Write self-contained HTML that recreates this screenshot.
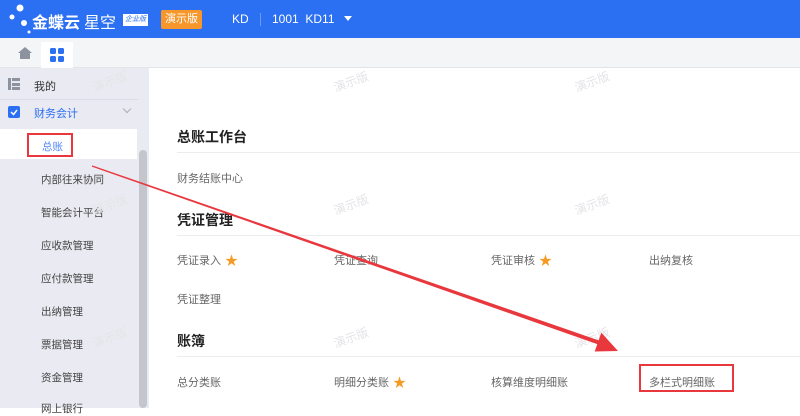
<!DOCTYPE html><html><head><meta charset="utf-8"><style>
*{margin:0;padding:0;box-sizing:border-box}
body{width:800px;height:408px;overflow:hidden;position:relative;background:#fff;font-family:"Liberation Sans","Noto Sans CJK SC",sans-serif;font-size:11px;color:#333}
.a{position:absolute;white-space:nowrap}
.hd{position:absolute;left:0;top:0;width:800px;height:38px;background:#2b6ff2}
.tb{position:absolute;left:0;top:38px;width:800px;height:30px;background:#f4f5f7;border-bottom:1px solid #e3e4e8}
.sb{position:absolute;left:0;top:68px;width:138px;height:340px;background:#eaeaf2}
.sc{position:absolute;left:138px;top:68px;width:11px;height:340px;background:#eaeaf2}
.sci{position:absolute;left:139px;top:150px;width:8px;height:258px;background:#c4c6cc;border-radius:4px}
.mi{position:absolute;left:41px;color:#444;font-size:10.5px}
.hr{position:absolute;left:177px;width:623px;height:1px;background:#ececef}
.h{position:absolute;left:177px;font-size:14px;font-weight:bold;color:#222}
.it{position:absolute;color:#666;font-size:11px}
.wm{position:absolute;color:#e4e4e8;font-size:12px;transform:rotate(-20deg)}
.star{position:absolute;top:-2px;color:#f59a23;font-size:13px}
</style></head><body>
<div class="hd"></div>
<svg class="a" style="left:6px;top:3px" width="30" height="32"><circle cx="14" cy="5" r="3.5" fill="#fff"/><circle cx="6" cy="14" r="2.5" fill="#fff"/><circle cx="18" cy="20" r="3" fill="#fff"/><circle cx="23" cy="29" r="1.5" fill="#fff"/></svg>
<div class="a" style="left:32px;top:9px;color:#fff;font-size:16px;font-weight:bold">金蝶云</div>
<div class="a" style="left:84px;top:9px;color:#fff;font-size:16px">星空</div>
<div class="a" style="left:123px;top:14px;width:25px;height:12px;border:1px solid #fff;color:#2b6ff2;background:#fff;font-size:7px;line-height:10px;text-align:center;font-style:italic">企业版</div>
<div class="a" style="left:161px;top:10px;width:41px;height:19px;background:#f7962a;color:#fff;font-size:11px;line-height:19px;text-align:center;border-radius:2px">演示版</div>
<div class="a" style="left:232px;top:12px;color:#fff;font-size:12px">KD</div>
<div class="a" style="left:260px;top:13px;width:1px;height:13px;background:#6d98f5"></div>
<div class="a" style="left:272px;top:12px;color:#fff;font-size:12px">1001&nbsp; KD11</div>
<div class="a" style="left:344px;top:16px;border-left:4px solid transparent;border-right:4px solid transparent;border-top:5px solid #fff"></div>
<div class="tb"></div>
<svg class="a" style="left:17px;top:46px" width="16" height="14"><path d="M8 1 L15 7 L13 7 L13 13 L3 13 L3 7 L1 7 Z" fill="#8d939e"/></svg>
<div class="a" style="left:41px;top:42px;width:32px;height:26px;background:#fff"></div>
<svg class="a" style="left:50px;top:48px" width="15" height="15"><rect x="0" y="0" width="6" height="6" rx="1.5" fill="#2b6ff2"/><rect x="8" y="0" width="6" height="6" rx="1.5" fill="#2b6ff2"/><rect x="0" y="8" width="6" height="6" rx="1.5" fill="#2b6ff2"/><rect x="8" y="8" width="6" height="6" rx="1.5" fill="#2b6ff2"/></svg>
<div class="sb"></div><div class="sc"></div><div class="sci"></div>
<div class="a" style="left:0;top:99px;width:138px;height:1px;background:#dcdce6"></div>
<svg class="a" style="left:8px;top:78px" width="12" height="12"><rect x="0" y="0" width="3" height="12" fill="#8d939e"/><rect x="4" y="0" width="8" height="3" fill="#8d939e"/><rect x="4" y="5" width="8" height="3" fill="#8d939e"/><rect x="4" y="9" width="8" height="3" fill="#8d939e"/></svg>
<div class="a" style="left:34px;top:78px;font-size:11px;color:#333">我的</div>
<svg class="a" style="left:8px;top:106px" width="12" height="12"><rect width="12" height="12" rx="2" fill="#2b6ff2"/><path d="M3 6 L5.5 8.5 L9 4" stroke="#fff" stroke-width="1.5" fill="none"/></svg>
<div class="a" style="left:34px;top:105px;font-size:11px;color:#2b6ff2">财务会计</div>
<div class="a" style="left:124px;top:106px;width:6px;height:6px;border-right:1px solid #a9acb5;border-bottom:1px solid #a9acb5;transform:rotate(45deg)"></div>
<div class="a" style="left:0;top:129px;width:137px;height:30px;background:#fff"></div>
<div class="a" style="left:27px;top:133px;width:46px;height:24px;border:2px solid #e8383d"></div>
<div class="a" style="left:42px;top:139px;font-size:10.5px;color:#4f86f7">总账</div>
<div class="mi" style="top:172px">内部往来协同</div>
<div class="mi" style="top:205px">智能会计平台</div>
<div class="mi" style="top:238px">应收款管理</div>
<div class="mi" style="top:271px">应付款管理</div>
<div class="mi" style="top:304px">出纳管理</div>
<div class="mi" style="top:337px">票据管理</div>
<div class="mi" style="top:370px">资金管理</div>
<div class="mi" style="top:401px">网上银行</div>
<div class="wm" style="left:92px;top:73px">演示版</div>
<div class="wm" style="left:92px;top:196px">演示版</div>
<div class="wm" style="left:92px;top:329px">演示版</div>
<div class="wm" style="left:333px;top:73px">演示版</div>
<div class="wm" style="left:574px;top:73px">演示版</div>
<div class="wm" style="left:333px;top:196px">演示版</div>
<div class="wm" style="left:574px;top:196px">演示版</div>
<div class="wm" style="left:574px;top:329px">演示版</div>
<div class="wm" style="left:333px;top:329px">演示版</div>
<div class="h" style="top:127px">总账工作台</div>
<div class="hr" style="top:152px"></div>
<div class="it" style="left:177px;top:170px">财务结账中心</div>
<div class="h" style="top:210px">凭证管理</div>
<div class="hr" style="top:235px"></div>
<div class="it" style="left:177px;top:252px">凭证录入<span class="star" style="left:48px">★</span></div>
<div class="it" style="left:334px;top:252px">凭证查询</div>
<div class="it" style="left:491px;top:252px">凭证审核<span class="star" style="left:48px">★</span></div>
<div class="it" style="left:649px;top:252px">出纳复核</div>
<div class="it" style="left:177px;top:291px">凭证整理</div>
<div class="h" style="top:331px">账簿</div>
<div class="hr" style="top:356px"></div>
<div class="it" style="left:177px;top:374px">总分类账</div>
<div class="it" style="left:334px;top:374px">明细分类账<span class="star" style="left:59px">★</span></div>
<div class="it" style="left:491px;top:374px">核算维度明细账</div>
<div class="a" style="left:639px;top:364px;width:95px;height:28px;border:2px solid #e8383d"></div>
<div class="it" style="left:649px;top:374px">多栏式明细账</div>
<svg class="a" style="left:0;top:0" width="800" height="408"><polygon points="92.2,165.4 603.7,342.1 602.3,345.9 91.8,166.6" fill="#e8383d"/><polygon points="618,351 594.7,351.5 601.3,332.6" fill="#e8383d"/></svg>
</body></html>
